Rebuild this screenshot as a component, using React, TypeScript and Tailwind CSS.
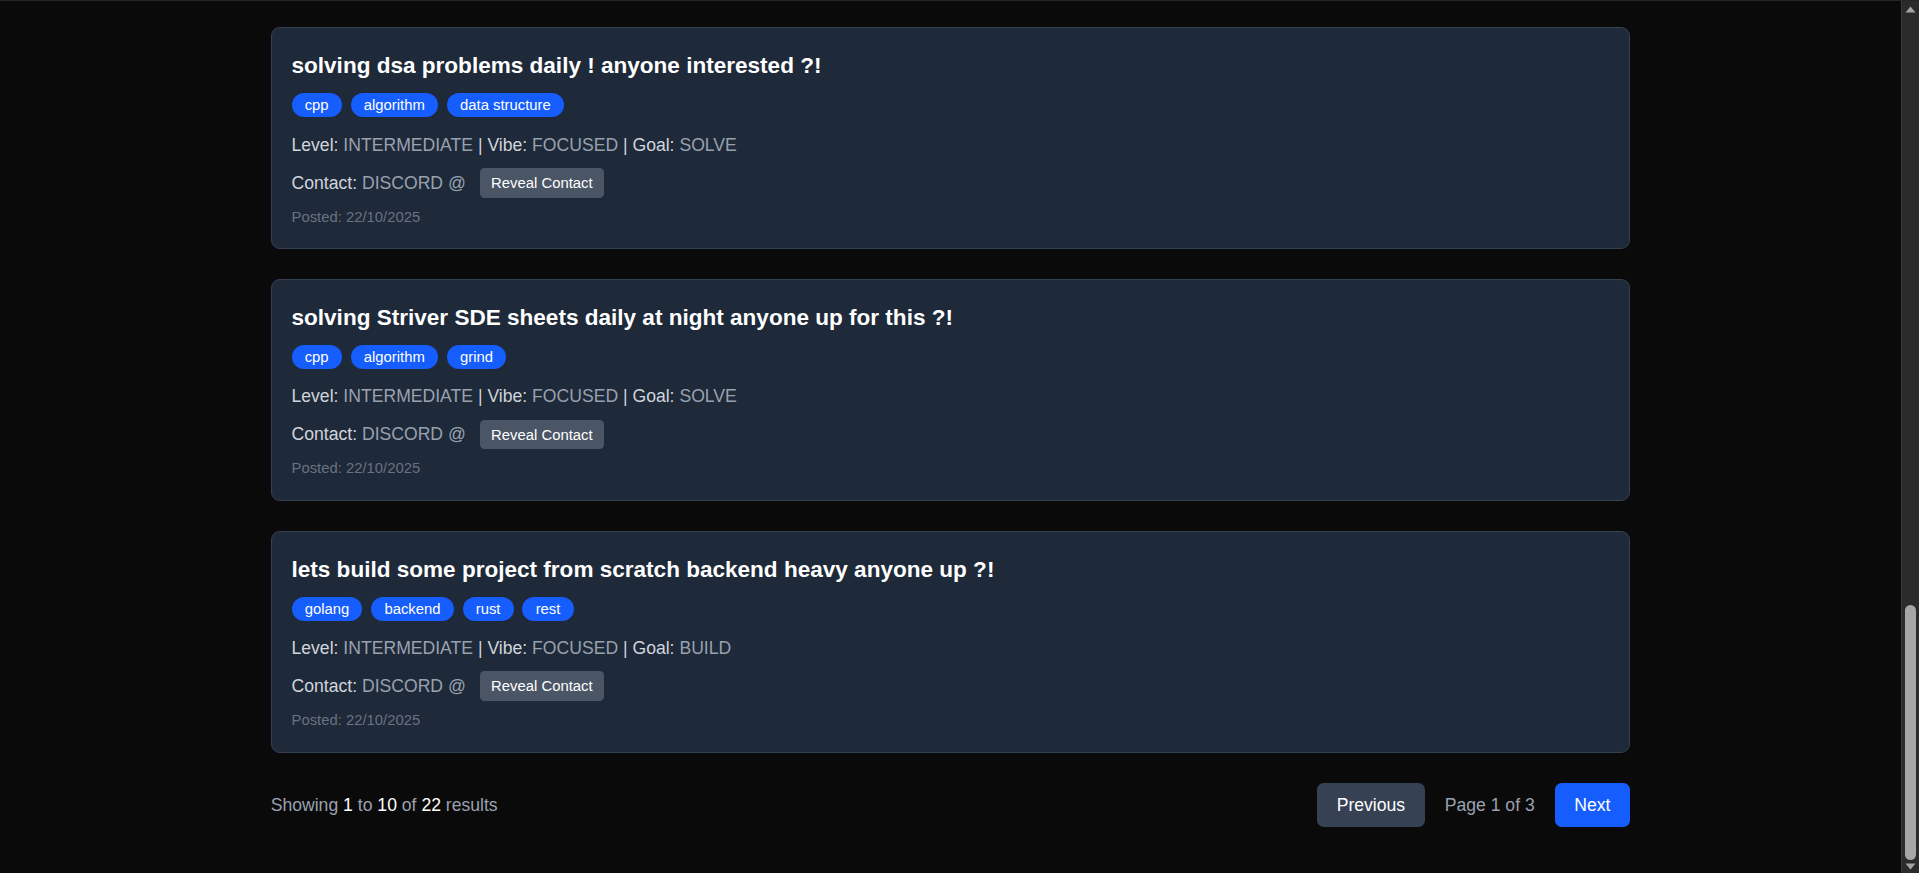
import React from "react";

interface Post {
  id: number;
  title: string;
  tags: string[];
  level: string;
  vibe: string;
  goal: string;
  contact: string;
  posted: string;
}

const posts: Post[] = [
  {
    id: 8,
    title: "solving dsa problems daily ! anyone interested ?!",
    tags: ["cpp", "algorithm", "data structure"],
    level: "INTERMEDIATE",
    vibe: "FOCUSED",
    goal: "SOLVE",
    contact: "DISCORD",
    posted: "22/10/2025",
  },
  {
    id: 9,
    title: "solving Striver SDE sheets daily at night anyone up for this ?!",
    tags: ["cpp", "algorithm", "grind"],
    level: "INTERMEDIATE",
    vibe: "FOCUSED",
    goal: "SOLVE",
    contact: "DISCORD",
    posted: "22/10/2025",
  },
  {
    id: 10,
    title: "lets build some project from scratch backend heavy anyone up ?!",
    tags: ["golang", "backend", "rust", "rest"],
    level: "INTERMEDIATE",
    vibe: "FOCUSED",
    goal: "BUILD",
    contact: "DISCORD",
    posted: "22/10/2025",
  },
];

function PostCard({ post }: { post: Post }) {
  return (
    <div className="bg-[#1e2939] border border-[#364153] rounded-lg px-[18px] pt-[21px] pb-[20px]">
      <h2 className="text-[20.5px] leading-7 font-bold text-white">{post.title}</h2>

      <div className="mt-2.5 flex gap-2">
        {post.tags.map((tag) => (
          <span
            key={tag}
            className="bg-[#155dfc] text-white text-[13.5px] leading-5 py-px px-3 rounded-full"
          >
            {tag}
          </span>
        ))}
      </div>

      <p className="mt-[13px] text-base leading-6 text-[#d1d5dc]">
        Level: <span className="text-[#99a1af]">{post.level}</span> | Vibe:{" "}
        <span className="text-[#99a1af]">{post.vibe}</span> | Goal:{" "}
        <span className="text-[#99a1af]">{post.goal}</span>
      </p>

      <div className="mt-[9px] flex items-center text-base leading-6 text-[#d1d5dc]">
        <span>
          Contact: <span className="text-[#99a1af]">{post.contact} @</span>
        </span>
        <button className="ml-[13px] bg-[#4a5565] text-white text-[13.5px] leading-5 px-[10px] py-[3.5px] rounded">
          Reveal Contact
        </button>
      </div>

      <p className="mt-[10px] text-[13.5px] leading-4 text-[#6a7282]">Posted: {post.posted}</p>
    </div>
  );
}

function Scrollbar() {
  return (
    <div className="w-[18px] shrink-0 bg-[#2b2b2b] border-l border-[#3a3a3a] flex flex-col items-center">
      <svg className="mt-[5px]" width="11" height="7" viewBox="0 0 11 7">
        <path d="M5.5 0.5 L10.5 6.5 L0.5 6.5 Z" fill="#a3a3a3" />
      </svg>
      <div className="flex-1 w-full flex flex-col justify-end items-center pb-[3px]">
        <div className="w-[11px] h-[255px] rounded-full bg-[#a6a6a6]" />
      </div>
      <svg className="mb-[3px]" width="11" height="7" viewBox="0 0 11 7">
        <path d="M0.5 0.5 L10.5 0.5 L5.5 6.5 Z" fill="#a3a3a3" />
      </svg>
    </div>
  );
}

export default function App() {
  return (
    <div
      className="h-screen w-full overflow-hidden flex bg-[#0a0a0a] border-t border-[#262626]"
      style={{ fontFamily: '"Liberation Sans", Arial, sans-serif' }}
    >
      <div className="flex-1 min-w-0 [zoom:1.1]">
        <div className="max-w-[1236px] mx-auto pt-[24px]">
          <div className="flex flex-col gap-[27px]">
            {posts.map((post) => (
              <PostCard key={post.id} post={post} />
            ))}
          </div>

          <div className="mt-[28px] flex items-center justify-between">
            <p className="text-base leading-6 text-[#99a1af]">
              Showing <span className="font-medium text-white">1</span> to{" "}
              <span className="font-medium text-white">10</span> of{" "}
              <span className="font-medium text-white">22</span> results
            </p>
            <div className="flex items-center gap-[18px]">
              <button className="bg-[#364153] text-white text-base leading-6 px-[18px] py-2 rounded-md">
                Previous
              </button>
              <span className="text-base leading-6 text-[#99a1af]">Page 1 of 3</span>
              <button className="bg-[#155dfc] text-white text-base leading-6 px-[18px] py-2 rounded-md">
                Next
              </button>
            </div>
          </div>
        </div>
      </div>
      <Scrollbar />
    </div>
  );
}
